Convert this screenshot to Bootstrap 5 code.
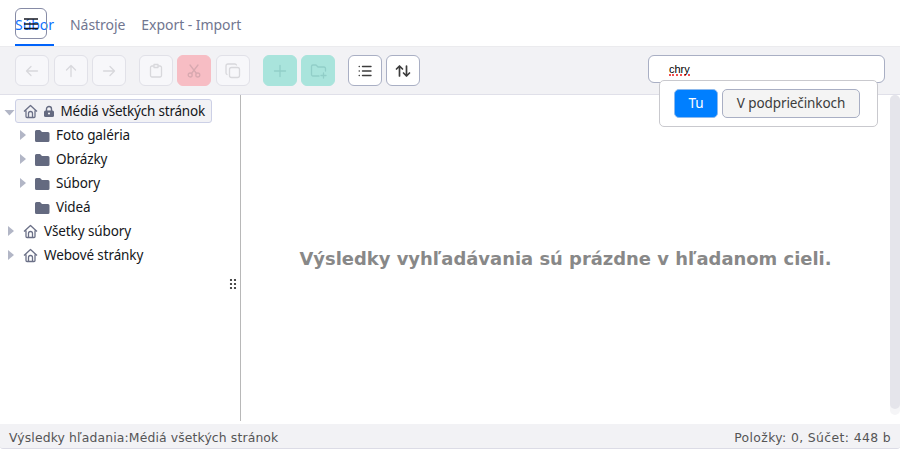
<!DOCTYPE html>
<html lang="sk">
<head>
<meta charset="utf-8">
<meta name="viewport" content="width=device-width, initial-scale=1">
<title>Médiá všetkých stránok</title>
<link href="https://cdn.jsdelivr.net/npm/bootstrap@5.3.0/dist/css/bootstrap.min.css" rel="stylesheet">
<style>
body{height:450px;font-family:"Noto Sans","Open Sans",sans-serif;font-size:13.5px;letter-spacing:-.11px;color:#151720}
svg{display:block;flex:none}
.topnav{height:46px;padding-left:15px;gap:16px}
.topnav .nav-link{height:46px;padding:4px 0 0;line-height:42px;color:#717690;font-size:14px;letter-spacing:-.05px;border-radius:0;white-space:nowrap}
.topnav .nav-link.active{color:#0b70ff;width:39px;border-bottom:2px solid #0063fb;line-height:42px}
.menu-toggle{left:15px;top:8px;width:32px;height:31px;padding:0;border:1px solid #868ba6;border-radius:6px}
.toolbar{height:49px;background:#f2f2f5;border-top:1px solid #ebebee;border-bottom:1px solid #e0e0e9;padding:0 15px;gap:4.65px}
.tool{width:34px;height:31px;padding:0;border:1px solid #a9afc4;border-radius:6px;background:#fff;color:#3c3c3c;display:flex;align-items:center;justify-content:center}
.tool svg{fill:none;stroke:currentColor;stroke-width:1.3;stroke-linecap:round;stroke-linejoin:round}
.tool:disabled{opacity:1;background:#f7f7fa;border-color:#e1e1e8;color:#d8d8dc}
.tool.cut:disabled{background:#f7bdc4;border-color:#f7bdc4;color:#d8a9b0}
.tool.add:disabled{background:#a9e4dc;border-color:#a9e4dc;color:#91cec8}
.group-end{margin-right:7.9px}
.search{width:237px;height:28px}
.search .form-control{height:28px;padding:0 20px;border:1px solid #a9afc4;border-radius:6px;font:11px "Liberation Sans",sans-serif;letter-spacing:0;line-height:27px;color:#000}
.typo{display:block;width:21px;margin-top:7px;line-height:13px;height:13px;border-bottom:2px dotted #f04f4f}
.scope{left:11px;top:25px;width:219px;height:47px;border:1px solid #c9c9ce;border-radius:5px;background:#fff;padding:0 14px;gap:4px;z-index:5}
.scope .btn{height:29px;padding:0;font-size:13.5px;letter-spacing:-.1px;line-height:27px;border:1px solid #a9afc4;border-radius:5px;background:#f4f4f4;color:#3c3c3c;width:138px}
.scope .btn.on{width:44px;background:#007fff;color:#fff;border-color:#8bb9ee}
.workspace{height:329px}
.tree{width:241px;padding-top:4px}
.tree-line{height:326px;width:1px;right:0;top:0;background:#b8b8b8}
.node{height:24px;white-space:nowrap}
.arrow{width:7px;fill:#b2b6c6;margin-right:9px}
.root{padding-left:7px}
.child{padding-left:19px}
.node svg.home{width:15px;margin-right:6px;fill:none;stroke:#6b7087;stroke-width:1.3;stroke-linejoin:round}
.node svg.dir{width:15px;margin-right:6px;fill:#646a80}
.chosen{height:24px;border:1px solid #ccd0e6;border-radius:3px;background:#f2f2f5;padding:0 6px 0 7px;width:197px}
.chosen span{letter-spacing:-.2px}
.grip{right:4px;top:183px;fill:#202020}
.empty-note{font:bold 17.93px "DejaVu Sans",sans-serif;letter-spacing:0;color:#888;white-space:nowrap;margin-bottom:2px;margin-right:2px}
.track{right:0;top:0;width:10px;height:320px;background:#f5f5f7;border-radius:5px}
.thumb{height:314px;background:#e5e5eb;border-radius:5px}
.status{height:25px;margin-bottom:1px;background:#f2f2f5;border-bottom:1px solid #dcdce6;border-radius:0 0 3px 3px;padding:2px 9px 0;font:12.4px "DejaVu Sans",sans-serif;letter-spacing:.13px;color:#555}
.totals{letter-spacing:.38px}
</style>
</head>
<body class="bg-white overflow-hidden d-flex flex-column">
<nav class="nav topnav position-relative flex-nowrap">
  <a class="nav-link active" href="#">Súbor</a>
  <a class="nav-link" href="#">Nástroje</a>
  <a class="nav-link" href="#">Export - Import</a>
  <button class="btn menu-toggle position-absolute d-flex align-items-center justify-content-center" aria-label="Menu"><svg width="16" height="13" stroke="#151720" stroke-width="1.7"><path d="M1 2h14M1 7h14M1 11.500h14"/></svg></button>
</nav>
<div class="toolbar d-flex align-items-center">
  <button class="btn tool" disabled aria-label="Späť"><svg width="14" height="14"><path d="M12.5 7h-11M6 2.5 1.5 7 6 11.5"/></svg></button>
  <button class="btn tool" disabled aria-label="Hore"><svg width="14" height="14"><path d="M7 12.5v-11M2.5 6 7 1.5 11.5 6"/></svg></button>
  <button class="btn tool group-end" disabled aria-label="Ďalej"><svg width="14" height="14"><path d="M1.5 7h11M8 2.5 12.5 7 8 11.5"/></svg></button>
  <button class="btn tool" disabled aria-label="Vložiť"><svg width="14" height="16"><path d="M5 3H3a1.500 1.500 0 0 0-1.500 1.500v8A1.500 1.500 0 0 0 3 14h8a1.500 1.500 0 0 0 1.500-1.500v-8A1.500 1.500 0 0 0 11 3H9M5 1.500h4v3H5z"/></svg></button>
  <button class="btn tool cut" disabled aria-label="Vystrihnúť"><svg width="14" height="14"><path d="m3 1 6.500 8.500M11 1 4.500 9.500"/><circle cx="3.200" cy="11" r="2"/><circle cx="10.800" cy="11" r="2"/></svg></button>
  <button class="btn tool group-end" disabled aria-label="Kopírovať"><svg width="16" height="16"><rect x="4.500" y="4.500" width="10" height="10" rx="2"/><path d="M2 11.500a2 2 0 0 1-1-1.500V3a2 2 0 0 1 2-2h7a2 2 0 0 1 1.500 1"/></svg></button>
  <button class="btn tool add" disabled aria-label="Pridať"><svg width="14" height="14"><path d="M7 1.500v11M1.500 7h11"/></svg></button>
  <button class="btn tool add group-end" disabled aria-label="Nový priečinok"><svg width="17" height="16"><path d="M9 13H3a1.500 1.500 0 0 1-1.500-1.500v-8A1.500 1.500 0 0 1 3 2h3l2 2h6a1.500 1.500 0 0 1 1.500 1.500V8M13.500 10v5M11 12.500h5"/></svg></button>
  <button class="btn tool" aria-label="Zoznam"><svg width="14" height="12"><path d="M4.500 1.500h8.500M4.500 6h8.500M4.500 10.500h8.500M1.200 1.500h.1M1.200 6h.1M1.200 10.500h.1" stroke-width="1.4"/></svg></button>
  <button class="btn tool" aria-label="Zoradiť"><svg width="16" height="14"><path d="M4.500 12V2M1.500 5l3-3 3 3M11.500 2v10M8.500 9l3 3 3-3" stroke-width="1.7"/></svg></button>
  <div class="search position-relative ms-auto mb-1">
    <div class="form-control" role="searchbox"><span class="typo">chry</span></div>
    <div class="scope position-absolute d-flex align-items-center">
      <button class="btn on">Tu</button>
      <button class="btn">V podpriečinkoch</button>
    </div>
  </div>
</div>
<main class="workspace d-flex">
  <aside class="tree position-relative flex-shrink-0">
    <div class="node d-flex align-items-center ps-1">
      <svg width="11" height="6" class="mt-1"><path d="M.5 0h10l-5 5.500z" fill="#b2b6c6"/></svg>
      <div class="chosen d-flex align-items-center">
        <svg class="home" height="15" viewBox="0 0 15 15"><path d="M1 7.500 7.500 1.500 14 7.500M3 6.500V12.500a1 1 0 0 0 1 1h7a1 1 0 0 0 1-1V6.500M5.500 13.500v-4a2 2 0 0 1 4 0v4"/></svg>
        <svg width="10" height="13" viewBox="0 0 10 13"><path d="M2.500 6V4a2.500 2.500 0 0 1 5 0v2" fill="none" stroke="#646a80" stroke-width="1.400"/><rect y="5.500" width="10" height="6.500" rx="1.500" fill="#646a80"/><circle cx="5" cy="8.500" r="1" fill="#fff"/></svg>
        <span class="ps-1 ms-auto">Médiá všetkých stránok</span>
      </div>
    </div>
    <div class="node child d-flex align-items-center"><svg class="arrow" height="12"><path d="M1 1v10l6-5z"/></svg><svg class="dir" height="13"><path d="M0 2.500A1.500 1.500 0 0 1 1.500 1H5l2 2h6a1.500 1.500 0 0 1 1.500 1.500v7A1.500 1.500 0 0 1 13 13H1.500A1.500 1.500 0 0 1 0 11.500z"/></svg>Foto galéria</div>
    <div class="node child d-flex align-items-center"><svg class="arrow" height="12"><path d="M1 1v10l6-5z"/></svg><svg class="dir" height="13"><path d="M0 2.500A1.500 1.500 0 0 1 1.500 1H5l2 2h6a1.500 1.500 0 0 1 1.500 1.500v7A1.500 1.500 0 0 1 13 13H1.500A1.500 1.500 0 0 1 0 11.500z"/></svg>Obrázky</div>
    <div class="node child d-flex align-items-center"><svg class="arrow" height="12"><path d="M1 1v10l6-5z"/></svg><svg class="dir" height="13"><path d="M0 2.500A1.500 1.500 0 0 1 1.500 1H5l2 2h6a1.500 1.500 0 0 1 1.500 1.500v7A1.500 1.500 0 0 1 13 13H1.500A1.500 1.500 0 0 1 0 11.500z"/></svg>Súbory</div>
    <div class="node child d-flex align-items-center"><svg class="arrow invisible" height="12"></svg><svg class="dir" height="13"><path d="M0 2.500A1.500 1.500 0 0 1 1.500 1H5l2 2h6a1.500 1.500 0 0 1 1.500 1.500v7A1.500 1.500 0 0 1 13 13H1.500A1.500 1.500 0 0 1 0 11.500z"/></svg>Videá</div>
    <div class="node root d-flex align-items-center"><svg class="arrow" height="12"><path d="M1 1v10l6-5z"/></svg><svg class="home" height="15" viewBox="0 0 15 15"><path d="M1 7.500 7.500 1.500 14 7.500M3 6.500V12.500a1 1 0 0 0 1 1h7a1 1 0 0 0 1-1V6.500M5.500 13.500v-4a2 2 0 0 1 4 0v4"/></svg>Všetky súbory</div>
    <div class="node root d-flex align-items-center"><svg class="arrow" height="12"><path d="M1 1v10l6-5z"/></svg><svg class="home" height="15" viewBox="0 0 15 15"><path d="M1 7.500 7.500 1.500 14 7.500M3 6.500V12.500a1 1 0 0 0 1 1h7a1 1 0 0 0 1-1V6.500M5.500 13.500v-4a2 2 0 0 1 4 0v4"/></svg>Webové stránky</div>
    <svg class="grip position-absolute" width="8" height="12"><circle cx="2" cy="2" r="1.100"/><circle cx="6" cy="2" r="1.100"/><circle cx="2" cy="6" r="1.100"/><circle cx="6" cy="6" r="1.100"/><circle cx="2" cy="10" r="1.100"/><circle cx="6" cy="10" r="1.100"/></svg>
    <div class="tree-line position-absolute"></div>
  </aside>
  <section class="position-relative flex-grow-1 d-flex align-items-center justify-content-center pe-2">
    <div class="empty-note">Výsledky vyhľadávania sú prázdne v hľadanom cieli.</div>
    <div class="track position-absolute"><div class="thumb"></div></div>
  </section>
</main>
<footer class="status d-flex align-items-center justify-content-between">
  <span>Výsledky hľadania:Médiá všetkých stránok</span><span class="totals">Položky: 0, Súčet: 448 b</span>
</footer>
<script src="https://cdn.jsdelivr.net/npm/bootstrap@5.3.0/dist/js/bootstrap.bundle.min.js"></script>
</body>
</html>
